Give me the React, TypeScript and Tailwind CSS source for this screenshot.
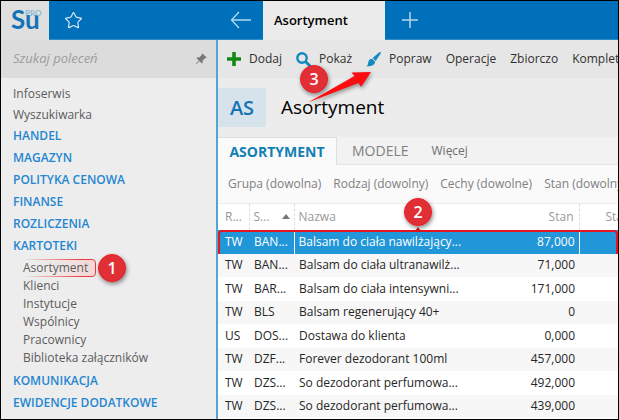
import React from 'react';
import { Star } from 'lucide-react';
import { BsPinAngleFill } from 'react-icons/bs';

const sections = ['HANDEL', 'MAGAZYN', 'POLITYKA CENOWA', 'FINANSE', 'ROZLICZENIA', 'KARTOTEKI'];
const fileLinks = ['Klienci', 'Instytucje', 'Wspólnicy', 'Pracownicy', 'Biblioteka załączników'];
const bottomSections = ['KOMUNIKACJA', 'EWIDENCJE DODATKOWE'];
const filters = ['Grupa (dowolna)', 'Rodzaj (dowolny)', 'Cechy (dowolne)', 'Stan (dowolny)'];

const rows = [
  { kind: 'TW', symbol: 'BAN...', name: 'Balsam do ciała nawilżający...', stock: '87,000' },
  { kind: 'TW', symbol: 'BAN...', name: 'Balsam do ciała ultranawilż...', stock: '71,000' },
  { kind: 'TW', symbol: 'BAR...', name: 'Balsam do ciała intensywni...', stock: '171,000' },
  { kind: 'TW', symbol: 'BLS', name: 'Balsam regenerujący 40+', stock: '0' },
  { kind: 'US', symbol: 'DOS...', name: 'Dostawa do klienta', stock: '0,000' },
  { kind: 'TW', symbol: 'DZF...', name: 'Forever dezodorant 100ml', stock: '457,000' },
  { kind: 'TW', symbol: 'DZS...', name: 'So dezodorant perfumowa...', stock: '492,000' },
  { kind: 'TW', symbol: 'DZS...', name: 'So dezodorant perfumowa...', stock: '439,000' },
];

const Badge: React.FC<{ label: string }> = ({ label }) => (
  <span className="flex size-7 items-center justify-center rounded-full border border-[#f01a20] bg-[#e03036] text-base font-semibold text-white shadow-[1px_2px_4px_rgba(0,0,0,0.45)]">
    {label}
  </span>
);

const SectionLink: React.FC<{ label: string }> = ({ label }) => (
  <a href="#" className="block h-[22px] pl-3 leading-[22px] font-semibold text-[#1f86d2]">
    {label}
  </a>
);

const Header: React.FC = () => (
  <header className="flex h-[39px] shrink-0 border-b border-[#2d8cc6] bg-[#0070ba]">
    <div className="flex w-[217px] shrink-0">
      {/* Logo */}
      <div className="relative -mb-px w-12 bg-[#dfdfdf] pl-[10px] font-['Lato',sans-serif] text-[#1273b6]">
        <span className="text-[26px] leading-[37px] font-bold">Su</span>
        <span className="absolute top-2 left-6 text-[8px] leading-[8px] font-bold text-[#8bb9d6]">PRO</span>
      </div>
      <button aria-label="Ulubione" className="flex w-12 items-center justify-center text-[#d5e9f6]">
        <Star size={19} strokeWidth={1.5} />
      </button>
    </div>
    <button aria-label="Wstecz" className="flex w-[45px] items-center justify-center">
      <svg width="22" height="18" viewBox="0 0 22 18" fill="none" stroke="#b5d7ec" strokeWidth="1.3">
        <path d="M9 1 1.5 9 9 17M1.5 9H21" />
      </svg>
    </button>
    <div className="-mb-px w-[122px] bg-[#ebebeb] pl-[11px] text-[13px] leading-[38px] font-semibold text-black">
      Asortyment
    </div>
    <button aria-label="Nowa karta" className="flex w-[50px] items-center justify-center">
      <svg width="18" height="18" viewBox="0 0 18 18" stroke="#b5d7ec" strokeWidth="1.5">
        <path d="M9 1v16M1 9h16" />
      </svg>
    </button>
  </header>
);

const Sidebar: React.FC = () => (
  <aside className="w-[217px] shrink-0 border-r-2 border-[#55a5d2] bg-[#ededed]">
    <div className="flex h-[38px] items-center bg-[#dcdcdc] pr-[9px] pl-3">
      <input
        aria-label="Szukaj poleceń"
        placeholder="Szukaj poleceń"
        className="min-w-0 flex-1 bg-transparent text-[13px] italic outline-none placeholder:text-[#9d9d9d]"
      />
      <BsPinAngleFill size={12} className="text-[#777]" />
    </div>
    <nav className="pt-[5px] text-[#5c5c5c]">
      <a href="#" className="block h-[21px] pl-3 leading-[21px]">Infoserwis</a>
      <a href="#" className="block h-[21px] pl-3 leading-[21px]">Wyszukiwarka</a>
      {sections.map((s) => (
        <SectionLink key={s} label={s} />
      ))}
      <div className="pt-[2px] pb-[3px] pl-[22px]">
        <div className="relative w-[76px]">
          <span className="absolute inset-y-0 left-0 w-[73px] rounded-r border-y border-r border-[#ee3a3d] bg-linear-to-r from-transparent to-[#f3d6d6] mask-l-from-20%" />
          <a href="#" className="relative block h-[18px] leading-[18px]">Asortyment</a>
          <span className="absolute -top-[5px] left-[75px] z-10">
            <Badge label="1" />
          </span>
        </div>
        {fileLinks.map((l) => (
          <a key={l} href="#" className="block h-[18px] leading-[18px]">{l}</a>
        ))}
      </div>
      {bottomSections.map((s) => (
        <SectionLink key={s} label={s} />
      ))}
    </nav>
  </aside>
);

const Toolbar: React.FC = () => (
  <div className="relative flex h-[38px] items-center gap-[14px] bg-[#e6e6e6] pl-[9px] whitespace-nowrap text-[#303030]">
    <button className="flex items-center gap-2">
      <svg width="14" height="14" viewBox="0 0 14 14" stroke="#128a16" strokeWidth="3.6">
        <path d="M7 0v14M0 7h14" />
      </svg>
      Dodaj
    </button>
    <button className="flex items-center gap-2">
      <svg width="15" height="15" viewBox="0 0 15 15" fill="none" stroke="#1489bd">
        <circle cx="6" cy="6" r="4.7" strokeWidth="2.4" />
        <path d="m9.5 9.5 5 5" strokeWidth="3" />
      </svg>
      Pokaż
    </button>
    <button className="flex items-center gap-2">
      <svg width="15" height="15" viewBox="0 0 15 15" fill="#1489bd">
        <path d="M14.7.2c.4.4.2 1-.2 1.6L9.7 9 6.6 6 13 .6c.7-.5 1.3-.8 1.7-.4Z" />
        <path d="m6 6.7 3 2.9c.4 3-3.2 5.3-8.8 4.6 2-.9 1.700-2.500 2.200-4.500C2.900 7.900 4.400 6.600 6 6.700Z" />
      </svg>
      Popraw
    </button>
    <button>Operacje</button>
    <button>Zbiorczo</button>
    <button>Komplet</button>
    {/* Step 3 marker with its arrow */}
    <span className="absolute top-[25px] left-[82px] z-10">
      <Badge label="3" />
    </span>
    <svg className="absolute top-[28px] left-[88px] z-20 drop-shadow-[1px_2px_2px_rgba(0,0,0,0.4)]" width="68" height="36" viewBox="0 0 68 36">
      <path d="M2 34.500 48.500 8 45.500 4.500 65 4 55 19 52.500 15Z" fill="#fb0d10" />
    </svg>
  </div>
);

const ItemsTable: React.FC = () => (
  <table className="w-full table-fixed border-collapse whitespace-nowrap text-[#262626]">
    <colgroup>
      <col className="w-[31px]" />
      <col className="w-[45px]" />
      <col />
      <col className="w-[118px]" />
      <col className="w-[39px]" />
    </colgroup>
    <thead>
      <tr className="h-[26px] border-t border-[#ebebeb] text-left text-[#999]">
        <th className="border-r border-dashed border-r-[#ddd] p-0 pl-[7px] font-medium">R...</th>
        <th className="border-r border-dashed border-r-[#ddd] p-0 pl-1 font-medium">
          <span className="flex items-center justify-between pr-1">
            S...
            <svg width="8" height="5" viewBox="0 0 8 5" fill="#777">
              <path d="M4 0 8 5H0Z" />
            </svg>
          </span>
        </th>
        <th className="p-0 pl-1 font-medium">Nazwa</th>
        <th className="border-r border-dashed border-r-[#ddd] p-0 pr-[5px] text-right font-medium">Stan</th>
        <th className="overflow-hidden p-0 pl-[26px] font-medium">Stan</th>
      </tr>
    </thead>
    <tbody>
      {rows.map((row, i) => (
        <tr
          key={i}
          className={
            i === 0
              ? 'relative h-6 bg-[#2196d8] text-white'
              : 'h-[23px] odd:h-6 even:bg-[#f7f7f7]'
          }
        >
          <td className="p-0 pl-[7px]">
            {row.kind}
            {i === 0 && (
              <>
                <span className="absolute inset-0 rounded-t border-2 border-b-0 border-[#e5161d]" />
                <span className="absolute -top-8 left-[186px] z-10">
                  <Badge label="2" />
                </span>
                <svg className="absolute -top-[3px] left-[197px]" width="6" height="4" viewBox="0 0 6 4" fill="#e5161d">
                  <path d="M3 0 6 4H0Z" />
                </svg>
              </>
            )}
          </td>
          <td className="p-0 pl-[5px]">{row.symbol}</td>
          <td className={i === 0 ? 'border-l border-white p-0 pl-1' : 'p-0 pl-[5px]'}>{row.name}</td>
          <td className={i === 0 ? 'border-r border-white p-0 pr-1 text-right' : 'p-0 pr-1 text-right'}>{row.stock}</td>
          <td className="p-0" />
        </tr>
      ))}
    </tbody>
  </table>
);

const App: React.FC = () => {
  return (
    <div className="flex h-screen flex-col overflow-hidden border border-black bg-white font-['Open_Sans','Noto_Sans',sans-serif] text-xs">
      <Header />
      <div className="flex min-h-0 flex-1">
        <Sidebar />
        <main className="min-w-0 flex-1 overflow-hidden bg-white">
          <Toolbar />
          <div className="flex h-[59px] items-center gap-[15px] bg-[#ececec]">
            <span className="flex h-[39px] w-12 items-center justify-center bg-[#d7e3ea] text-xl font-semibold text-[#1273b6]">
              AS
            </span>
            <h1 className="text-[19px] text-black">Asortyment</h1>
          </div>
          <div className="flex h-7 items-stretch border-b border-[#e6e6e6] bg-[#f2f2f2] text-[#808080]">
            <button className="-mb-px w-[119px] border-t border-r border-[#dedede] bg-[#fafafa] text-sm font-bold text-[#1080b4]">
              ASORTYMENT
            </button>
            <button className="pl-[15px] text-sm">MODELE</button>
            <button className="pl-[23px] text-[#6e6e6e]">Więcej</button>
          </div>
          <div className="flex h-[38px] items-center gap-3 bg-[#fafafa] pl-[10px] whitespace-nowrap text-[#808080]">
            {filters.map((f) => (
              <button key={f}>{f}</button>
            ))}
          </div>
          <ItemsTable />
        </main>
      </div>
    </div>
  );
};

export default App;
